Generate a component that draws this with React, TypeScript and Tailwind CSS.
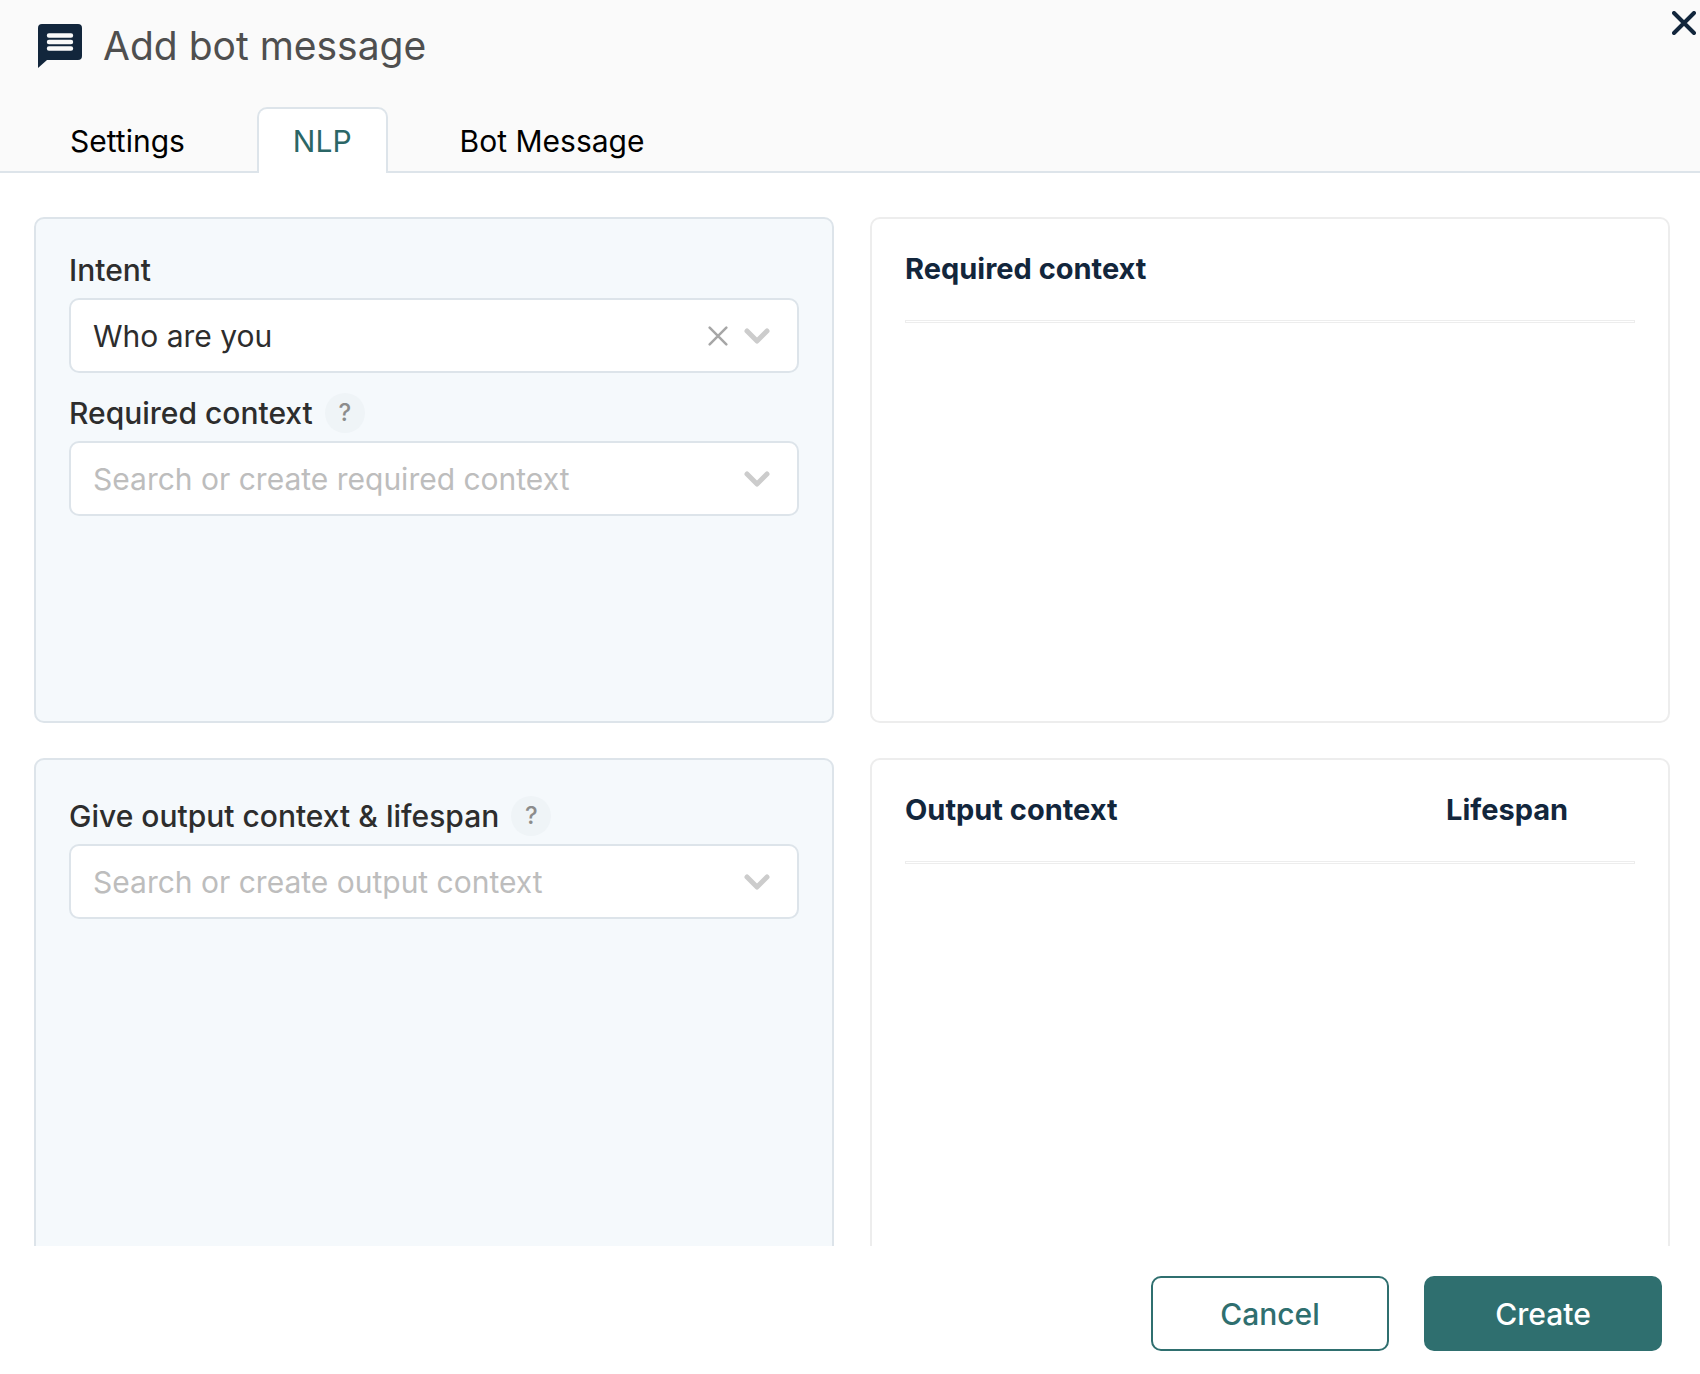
import { useState, type ReactNode } from "react";
import clsx from "clsx";

const TABS = [
  { id: "settings", label: "Settings" },
  { id: "nlp", label: "NLP" },
  { id: "message", label: "Bot Message" },
];

function MessageIcon() {
  return (
    <svg width="44" height="44" viewBox="0 0 44 44" aria-hidden="true">
      <path
        d="M4 0H40A4 4 0 0 1 44 4V32A4 4 0 0 1 40 36H9L0 44V4A4 4 0 0 1 4 0Z"
        fill="#12263c"
      />
      <path
        d="M11 11.5H33M11 18H33M11 24.5H33"
        stroke="#fafafa"
        strokeWidth="4.4"
        strokeLinecap="round"
      />
    </svg>
  );
}

function CrossIcon({ size, stroke }: { size: number; stroke: number }) {
  return (
    <svg width={size} height={size} viewBox="0 0 24 24" aria-hidden="true">
      <path
        d="M2 2L22 22M22 2L2 22"
        fill="none"
        stroke="currentColor"
        strokeWidth={stroke}
        strokeLinecap="round"
      />
    </svg>
  );
}

function ChevronIcon() {
  return (
    <svg width="26" height="16" viewBox="0 0 26 16" aria-hidden="true">
      <path
        d="M3 3L13 13L23 3"
        fill="none"
        stroke="#cccccc"
        strokeWidth="5"
        strokeLinecap="round"
        strokeLinejoin="round"
      />
    </svg>
  );
}

function Help({ label }: { label: string }) {
  return (
    <button
      type="button"
      aria-label={label}
      className="size-10 rounded-full bg-[#eff4f7] text-2xl font-medium text-[#8c8c8c]"
    >
      ?
    </button>
  );
}

function Field({
  id,
  label,
  help,
  children,
}: {
  id: string;
  label: string;
  help?: string;
  children: ReactNode;
}) {
  return (
    <div className="flex flex-col gap-2">
      <div className="flex h-10 items-center gap-3">
        <label htmlFor={id} className="font-medium text-[#2d2d2d]">
          {label}
        </label>
        {help && <Help label={help} />}
      </div>
      <div className="flex h-[75px] items-center rounded-[10px] border-2 border-[#dde4ea] bg-white pr-[27px] pl-[22px]">
        {children}
      </div>
    </div>
  );
}

function SearchInput({ id, placeholder }: { id: string; placeholder: string }) {
  return (
    <>
      <input
        id={id}
        type="text"
        placeholder={placeholder}
        className="h-full min-w-0 flex-1 text-[#2d2d2d] outline-none placeholder:text-[#bdbdbd]"
      />
      <button type="button" aria-label="Show options">
        <ChevronIcon />
      </button>
    </>
  );
}

function Panel({ tinted, children }: { tinted?: boolean; children: ReactNode }) {
  return (
    <section
      className={clsx(
        "min-h-[506px] rounded-[10px] border-2 px-[33px]",
        tinted ? "border-[#dde4ea] bg-[#f5f9fc]" : "border-[#ededed] bg-white",
      )}
    >
      {children}
    </section>
  );
}

function ContextHeader({ children }: { children: ReactNode }) {
  return (
    <>
      <div className="mt-[30px] mb-[31px] flex h-10 items-center text-[29px] font-bold text-[#12263c]">
        {children}
      </div>
      <hr className="h-[3px] border border-[#ededed]" />
    </>
  );
}

export default function App() {
  const [tab, setTab] = useState("nlp");
  const [intent, setIntent] = useState("who");

  return (
    <div className="flex h-screen flex-col bg-white font-['Inter',sans-serif] text-[30px] leading-10">
      <header className="bg-[#fafafa]">
        <div className="flex items-start justify-between">
          <div className="flex items-center gap-[21px] pt-[22px] pl-[38px]">
            <MessageIcon />
            <h1 className="text-[39px] leading-[48px] text-[#4f4f4f]">
              Add bot message
            </h1>
          </div>
          <button type="button" aria-label="Close" className="pt-[11px] pr-1 text-[#12263c]">
            <CrossIcon size={24} stroke={4} />
          </button>
        </div>

        <div
          role="tablist"
          className="mt-[37px] flex gap-9 border-b-2 border-[#dde4ea] px-[34px]"
        >
          {TABS.map(({ id, label }) => (
            <button
              key={id}
              type="button"
              role="tab"
              aria-selected={tab === id}
              onClick={() => setTab(id)}
              className={clsx(
                "-mb-0.5 h-[66px] rounded-t-[10px] border-2 border-b-0 px-[34px]",
                tab === id
                  ? "border-[#dde4ea] bg-white text-[#2b6666]"
                  : "border-transparent text-black",
              )}
            >
              {label}
            </button>
          ))}
        </div>
      </header>

      <main className="grid min-h-0 flex-1 grid-cols-2 content-start gap-x-9 gap-y-[35px] overflow-hidden pt-11 pr-[30px] pl-[34px]">
        <Panel tinted>
          <div className="flex flex-col gap-5 pt-[31px]">
            <Field id="intent" label="Intent">
              <select
                id="intent"
                value={intent}
                onChange={(e) => setIntent(e.target.value)}
                className="h-full min-w-0 flex-1 appearance-none text-[#2d2d2d] outline-none"
              >
                <option value="" />
                <option value="who">Who are you</option>
              </select>
              <button
                type="button"
                aria-label="Clear intent"
                onClick={() => setIntent("")}
                className="mr-4 text-[#a6a6a6]"
              >
                <CrossIcon size={20} stroke={3} />
              </button>
              <ChevronIcon />
            </Field>
            <Field id="required" label="Required context" help="About required context">
              <SearchInput id="required" placeholder="Search or create required context" />
            </Field>
          </div>
        </Panel>

        <Panel>
          <ContextHeader>
            <h2>Required context</h2>
          </ContextHeader>
        </Panel>

        <Panel tinted>
          <div className="pt-9">
            <Field id="output" label="Give output context & lifespan" help="About output context">
              <SearchInput id="output" placeholder="Search or create output context" />
            </Field>
          </div>
        </Panel>

        <Panel>
          <ContextHeader>
            <h2 className="flex-1">Output context</h2>
            <h2 className="w-[189px]">Lifespan</h2>
          </ContextHeader>
        </Panel>
      </main>

      <footer className="flex justify-end gap-[35px] pt-[30px] pr-[38px] pb-[23px] font-medium">
        <button
          type="button"
          className="h-[75px] w-[238px] rounded-[10px] border-2 border-[#2f6f6f] text-[#2f6f6f]"
        >
          Cancel
        </button>
        <button type="button" className="h-[75px] w-[238px] rounded-[10px] bg-[#2f6f6f] text-white">
          Create
        </button>
      </footer>
    </div>
  );
}
